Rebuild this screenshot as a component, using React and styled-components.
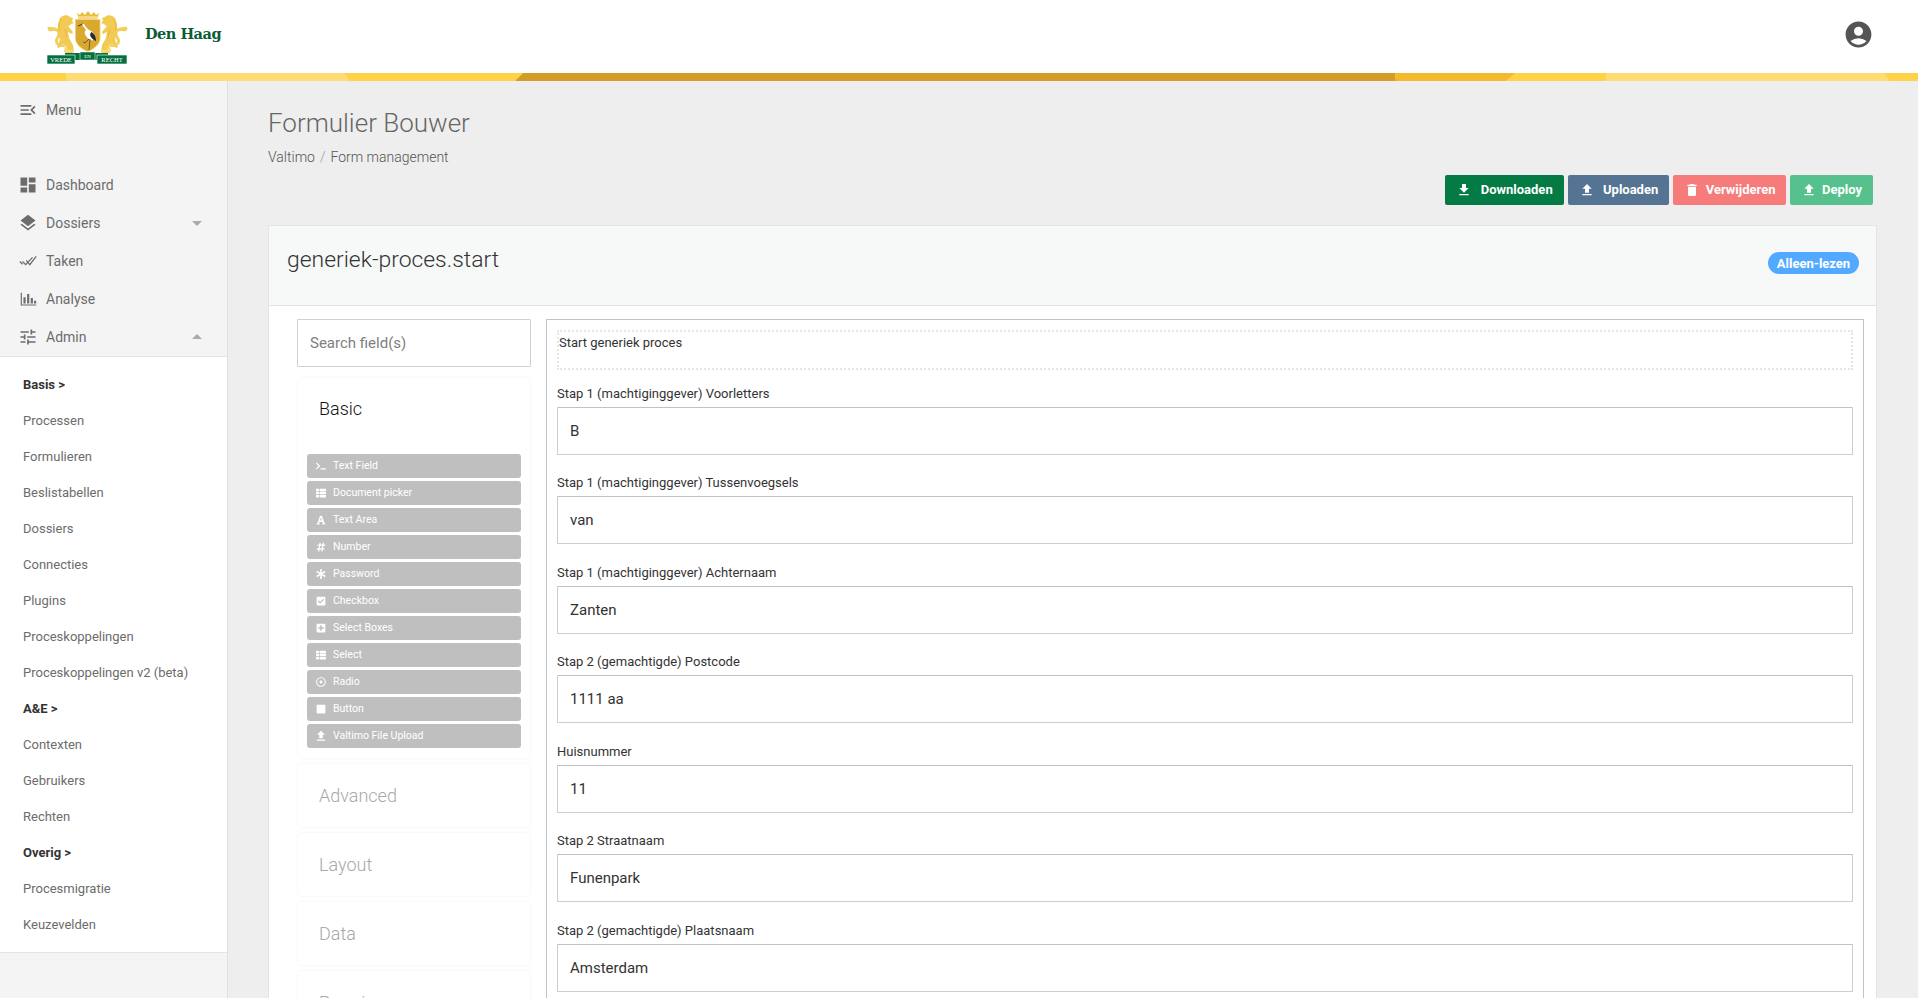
import React from 'react'
import styled, { createGlobalStyle } from 'styled-components'
import { MdMenuOpen, MdDashboard, MdLayers, MdTune, MdAccountCircle, MdFileDownload, MdFileUpload, MdDelete, MdArrowDropDown, MdArrowDropUp } from 'react-icons/md'
import { FaThList, FaFont, FaHashtag, FaAsterisk, FaCheckSquare, FaPlusSquare, FaRegDotCircle, FaStop, FaTerminal } from 'react-icons/fa'

const GlobalStyle = createGlobalStyle`
  html, body {
    margin: 0;
    height: 100%;
    overflow: hidden;
    background: #eeeeee;
  }

  * {
    box-sizing: border-box;
  }

  body {
    font-family: Roboto, sans-serif;
    -webkit-font-smoothing: antialiased;
  }
`

const Page = styled.div`
  height: 100vh;
  display: flex;
  flex-direction: column;
  overflow: hidden;
`

const Header = styled.header`
  height: 73px;
  flex: none;
  background: #ffffff;
  display: flex;
  align-items: center;
  justify-content: space-between;
  padding: 0 44px 0 47px;
`

const Brand = styled.div`
  display: flex;
  align-items: center;
  gap: 17px;
  margin-top: 1px;
`

const BrandName = styled.span`
  font-family: "DejaVu Serif", serif;
  font-weight: 700;
  font-size: 14.5px;
  letter-spacing: -0.5px;
  color: #0b5c36;
  margin-top: -7px;
`

const UserIcon = styled(MdAccountCircle)`
  width: 31px;
  height: 31px;
  color: #555555;
  margin-top: -4px;
`

const Strip = styled.svg`
  display: block;
  flex: none;
  width: 100%;
  height: 8px;
`

const Main = styled.div`
  flex: 1;
  min-height: 0;
  display: flex;
`

const Sidebar = styled.aside`
  width: 228px;
  flex: none;
  background: #f4f4f4;
  border-right: 1px solid #e0e0e0;
  padding-top: 10px;
`

const NavRow = styled.div`
  height: 38px;
  display: flex;
  align-items: center;
  padding-left: 20px;
  color: #6c6c6c;
  font-size: 14px;
  margin-bottom: ${(p) => (p.$spaced ? '37px' : '0')};
  position: relative;
`

const NavIcon = styled.span`
  width: 26px;
  height: 20px;
  display: flex;
  align-items: center;
  color: #6c6c6c;

  svg {
    width: 20px;
    height: 20px;
    flex: none;
    margin-left: -2.5px;
  }
`

const Caret = styled.span`
  position: absolute;
  right: 18px;
  top: 7px;
  color: #aaaaaa;
  display: flex;

  svg {
    width: 24px;
    height: 24px;
  }
`

const SubMenu = styled.div`
  background: #ffffff;
  border-top: 1px solid #e4e4e4;
  border-bottom: 1px solid #e4e4e4;
  padding: 9px 0 10px;
`

const SubItem = styled.div`
  height: 36px;
  display: flex;
  align-items: center;
  padding-left: 23px;
  font-size: 13px;
  font-weight: ${(p) => (p.$heading ? 700 : 400)};
  color: ${(p) => (p.$heading ? '#333333' : '#6c6c6c')};
`

const Content = styled.main`
  flex: 1;
  min-width: 0;
  padding: 0 41px 0 40px;
`

const Title = styled.h1`
  margin: 25px 0 0;
  font-size: 26px;
  line-height: 34px;
  font-weight: 300;
  color: #666666;
`

const Breadcrumb = styled.div`
  margin-top: 7px;
  display: flex;
  gap: 5px;
  font-size: 14px;
  line-height: 20px;
  font-weight: 300;
  color: #555555;
`

const Slash = styled.span`
  color: #9a9a9a;
`

const Actions = styled.div`
  display: flex;
  justify-content: flex-end;
  gap: 4px;
  padding-right: 4px;
  margin-top: 8px;
`

const ActionButton = styled.button`
  height: 30px;
  width: ${(p) => p.$width}px;
  border: 0;
  border-radius: 2px;
  background: ${(p) => p.$color};
  color: #ffffff;
  font-family: Roboto, sans-serif;
  font-size: 13px;
  font-weight: 700;
  display: flex;
  align-items: center;
  gap: ${(p) => p.$gap}px;
  padding: 0 0 1px 11px;

  svg {
    width: 16px;
    height: 16px;
    flex: none;
    margin-top: 1px;
  }
`

const Card = styled.section`
  margin-top: 20px;
  background: #ffffff;
  border: 1px solid #e3e5e5;
  border-bottom: 0;
`

const CardHeader = styled.div`
  height: 80px;
  background: #f7f8f8;
  border-bottom: 1px solid #e2e4e4;
  display: flex;
  align-items: center;
  justify-content: space-between;
  padding: 0 17px 0 18px;
`

const CardTitle = styled.h2`
  margin: -12px 0 0;
  font-size: 22.9px;
  font-weight: 300;
  color: #333333;
`

const Badge = styled.span`
  width: 91px;
  height: 22px;
  margin-top: -5px;
  border-radius: 11px;
  background: #53a9ff;
  color: #ffffff;
  font-size: 13px;
  font-weight: 700;
  display: flex;
  align-items: center;
  justify-content: center;
`

const Builder = styled.div`
  display: grid;
  grid-template-columns: 234px 1fr;
  gap: 15px;
  padding: 13px 12px 0 28px;
`

const Palette = styled.div`
  display: flex;
  flex-direction: column;
  gap: 4px;
`

const SearchInput = styled.input`
  height: 48px;
  margin-bottom: 6px;
  border: 1px solid #cfd0d6;
  border-radius: 1px;
  padding: 0 12px;
  font-family: Roboto, sans-serif;
  font-size: 15px;
  color: #333333;
  outline: none;

  &::placeholder {
    color: #808080;
  }
`

const Group = styled.div`
  height: ${(p) => (p.$open ? '382px' : '65px')};
  border: 1px solid #fafafa;
  border-radius: 4px;
  box-shadow: 0 0 2px rgba(0, 0, 0, 0.02);
  padding: 0 9px;
`

const GroupTitle = styled.div`
  height: ${(p) => (p.$open ? '60px' : '63px')};
  display: flex;
  align-items: center;
  padding-left: 12px;
  font-size: 18px;
  font-weight: 300;
  color: ${(p) => (p.$open ? '#111111' : '#a8a8a8')};
`

const FieldList = styled.div`
  margin-top: 15.5px;
  display: flex;
  flex-direction: column;
  gap: 3px;
`

const FieldButton = styled.div`
  height: 24px;
  background: #bfbfbf;
  border-radius: 3px;
  color: #ffffff;
  font-size: 10.5px;
  font-weight: 400;
  display: flex;
  align-items: center;
  padding-left: 9px;

  svg {
    width: 10px;
    height: 10px;
    flex: none;
    margin-right: 7px;
  }
`

const UploadGlyph = styled(MdFileUpload)`
  && {
    width: 14px;
    height: 14px;
    margin: 0 5px 0 -2px;
  }
`

const FormBox = styled.div`
  border: 1px solid #c4c4c4;
  border-bottom: 0;
  padding: 10px 10px 0;
`

const IntroBox = styled.div`
  height: 40px;
  border: 2px dotted #e6e6e6;
  padding: 3px 0;
  font-size: 13px;
  line-height: 16px;
  color: #333333;
  margin-bottom: 15.5px;
`

const Field = styled.div`
  height: 89.5px;
`

const FieldLabel = styled.label`
  display: block;
  font-size: 13px;
  line-height: 16px;
  color: #333333;
  margin-bottom: 5px;
`

const FieldInput = styled.input`
  display: block;
  width: 100%;
  height: 48px;
  border: 1px solid #ccced6;
  border-top-color: #bfc1c8;
  border-radius: 1px;
  padding: 0 12px;
  font-family: Roboto, sans-serif;
  font-size: 15px;
  color: #333333;
  background: #ffffff;
  outline: none;
`

const TakenIcon = () => (
  <svg viewBox="-2 -2 22 22" fill="none" stroke="currentColor" strokeWidth="1.4">
    <path d="M0 9.5l3 3" />
    <path d="M3 9.5l3.5 3.5L14 5" />
    <path d="M7 8.5l1.5 1.5L11 13l7-9" />
  </svg>
)

const AnalyseIcon = () => (
  <svg viewBox="-2 -2 22 22" fill="currentColor">
    <path d="M1 2h1.3v13H18v1.2H1z" />
    <path d="M4 7h2.4v7H4zM8 3.5h2.4V14H8zM12 8h2.4v6H12zM15.6 11H18v3h-2.4z" />
  </svg>
)

const RibbonText = styled.text`
  font-family: "Liberation Serif", serif;
  font-size: ${(p) => (p.$small ? '5px' : '6.5px')};
  fill: #ffffff;
  text-anchor: middle;
`

const Logo = () => (
  <svg width="81" height="55" viewBox="0 0 81 55">
    <defs>
      <g id="lion">
        <path d="M3 17c-3-1-3 3-1 4 3 1 6-1 8 1 2 3-2 5-2 9 0 4 4 6 9 6v-2c-4 0-6-1-6-4 0-3 4-5 3-9-1-4-7-5-11-5z" fill="#f3cf5c" />
        <path d="M13 8c2-3 8-4 10-1l3 1-1 3 2 2-3 1c-1 1-2 2-3 2l5 6-1 2-4-2 1 6 4 7 1 7-2 1h-7l2-3-4-6-4 4-2-1 3-7-2-8 0-8z" fill="#f2cb55" />
        <path d="M14 9c-2 4-3 8-1 12M18 19l2 9" stroke="#e0b23a" strokeWidth="0.8" fill="none" />
        <path d="M18 33l3 7h5v2h-9z" fill="#f8dc7c" />
      </g>
    </defs>
    <use href="#lion" />
    <use href="#lion" transform="translate(81 0) scale(-1 1)" />
    <path d="M30 3l3 2 2-3 3 3 3-4 3 4 3-3 2 3 3-2-2 6H32z" fill="#e8bd3e" />
    <rect x="31" y="6" width="19" height="3" fill="#f3d987" />
    <path d="M28.5 9.5h24.5v19c0 6-7 11-12.2 13-5.300-2-12.300-7-12.300-13z" fill="#d9a82e" stroke="#f2d36a" strokeWidth="0.8" />
    <path d="M36 14l-5 2" stroke="#333333" strokeWidth="1" />
    <path d="M36 14c1 3 3 4 5 7" stroke="#ffffff" strokeWidth="2" fill="none" />
    <ellipse cx="43" cy="25" rx="6.500" ry="3.800" transform="rotate(45 43 25)" fill="#ffffff" />
    <path d="M44 22c3 1 5 4 5 9-3-1-5-3-6-6z" fill="#2a2a2a" />
    <path d="M42 29l-4 4-2-1M43 29l-1 11" stroke="#5a4a20" strokeWidth="0.8" fill="none" />
    <path d="M18 43h43v7H18z" fill="#05703f" />
    <path d="M33 42h15v8H33z" fill="#05703f" stroke="#ffffff" strokeWidth="0.5" />
    <path d="M0 45h28v9H0zM50 45h30v9H50z" fill="#05703f" stroke="#ffffff" strokeWidth="0.6" />
    <RibbonText x="14" y="52">VREDE</RibbonText>
    <RibbonText x="40.5" y="48" $small>EN</RibbonText>
    <RibbonText x="65" y="52">RECHT</RibbonText>
  </svg>
)

const stripSegments = [
  ['#ffd249', '0,0 66,0 66,8 0,8'],
  ['#ffdc73', '66,0 344,0 349,8 66,8'],
  ['#ffd249', '344,0 523,0 515,8 349,8'],
  ['#d49d25', '523,0 1395,0 1396,8 515,8'],
  ['#f5b92f', '1395,0 1516,0 1506,8 1396,8'],
  ['#ffd249', '1516,0 1606,0 1606,8 1506,8'],
  ['#ffdc73', '1606,0 1884,0 1889,8 1606,8'],
  ['#ffd249', '1884,0 1918,0 1918,8 1889,8'],
]

const navItems = [
  { label: 'Dashboard', icon: <MdDashboard /> },
  { label: 'Dossiers', icon: <MdLayers />, caret: <MdArrowDropDown /> },
  { label: 'Taken', icon: <TakenIcon /> },
  { label: 'Analyse', icon: <AnalyseIcon /> },
  { label: 'Admin', icon: <MdTune />, caret: <MdArrowDropUp /> },
]

const subItems = [
  { label: 'Basis >', heading: true },
  { label: 'Processen' },
  { label: 'Formulieren' },
  { label: 'Beslistabellen' },
  { label: 'Dossiers' },
  { label: 'Connecties' },
  { label: 'Plugins' },
  { label: 'Proceskoppelingen' },
  { label: 'Proceskoppelingen v2 (beta)' },
  { label: 'A&E >', heading: true },
  { label: 'Contexten' },
  { label: 'Gebruikers' },
  { label: 'Rechten' },
  { label: 'Overig >', heading: true },
  { label: 'Procesmigratie' },
  { label: 'Keuzevelden' },
]

const paletteFields = [
  { label: 'Text Field', icon: <FaTerminal /> },
  { label: 'Document picker', icon: <FaThList /> },
  { label: 'Text Area', icon: <FaFont /> },
  { label: 'Number', icon: <FaHashtag /> },
  { label: 'Password', icon: <FaAsterisk /> },
  { label: 'Checkbox', icon: <FaCheckSquare /> },
  { label: 'Select Boxes', icon: <FaPlusSquare /> },
  { label: 'Select', icon: <FaThList /> },
  { label: 'Radio', icon: <FaRegDotCircle /> },
  { label: 'Button', icon: <FaStop /> },
  { label: 'Valtimo File Upload', icon: <UploadGlyph /> },
]

const formFields = [
  { label: 'Stap 1 (machtiginggever) Voorletters', value: 'B' },
  { label: 'Stap 1 (machtiginggever) Tussenvoegsels', value: 'van' },
  { label: 'Stap 1 (machtiginggever) Achternaam', value: 'Zanten' },
  { label: 'Stap 2 (gemachtigde) Postcode', value: '1111 aa' },
  { label: 'Huisnummer', value: '11' },
  { label: 'Stap 2 Straatnaam', value: 'Funenpark' },
  { label: 'Stap 2 (gemachtigde) Plaatsnaam', value: 'Amsterdam' },
]

const actions = [
  { label: 'Downloaden', color: '#047a45', width: 119, gap: 8.7, icon: <MdFileDownload /> },
  { label: 'Uploaden', color: '#557493', width: 101, gap: 8, icon: <MdFileUpload /> },
  { label: 'Verwijderen', color: '#f67b7b', width: 113, gap: 5.7, icon: <MdDelete /> },
  { label: 'Deploy', color: '#57c18e', width: 83, gap: 5, icon: <MdFileUpload /> },
]

const App = () => (
  <Page>
    <GlobalStyle />
    <Header>
      <Brand>
        <Logo />
        <BrandName>Den Haag</BrandName>
      </Brand>
      <UserIcon />
    </Header>
    <Strip viewBox="0 0 1918 8" preserveAspectRatio="none">
      {stripSegments.map(([fill, points]) => (
        <polygon key={points} fill={fill} points={points} />
      ))}
    </Strip>
    <Main>
      <Sidebar>
        <NavRow $spaced>
          <NavIcon>
            <MdMenuOpen />
          </NavIcon>
          Menu
        </NavRow>
        {navItems.map((item) => (
          <NavRow key={item.label}>
            <NavIcon>{item.icon}</NavIcon>
            {item.label}
            {item.caret && <Caret>{item.caret}</Caret>}
          </NavRow>
        ))}
        <SubMenu>
          {subItems.map((item) => (
            <SubItem key={item.label} $heading={item.heading}>
              {item.label}
            </SubItem>
          ))}
        </SubMenu>
      </Sidebar>
      <Content>
        <Title>Formulier Bouwer</Title>
        <Breadcrumb>
          <span>Valtimo</span>
          <Slash>/</Slash>
          <span>Form management</span>
        </Breadcrumb>
        <Actions>
          {actions.map((action) => (
            <ActionButton key={action.label} $color={action.color} $width={action.width} $gap={action.gap}>
              {action.icon}
              {action.label}
            </ActionButton>
          ))}
        </Actions>
        <Card>
          <CardHeader>
            <CardTitle>generiek-proces.start</CardTitle>
            <Badge>Alleen-lezen</Badge>
          </CardHeader>
          <Builder>
            <Palette>
              <SearchInput placeholder="Search field(s)" readOnly />
              <Group $open>
                <GroupTitle $open>Basic</GroupTitle>
                <FieldList>
                  {paletteFields.map((field) => (
                    <FieldButton key={field.label}>
                      {field.icon}
                      {field.label}
                    </FieldButton>
                  ))}
                </FieldList>
              </Group>
              <Group>
                <GroupTitle>Advanced</GroupTitle>
              </Group>
              <Group>
                <GroupTitle>Layout</GroupTitle>
              </Group>
              <Group>
                <GroupTitle>Data</GroupTitle>
              </Group>
              <Group>
                <GroupTitle>Premium</GroupTitle>
              </Group>
            </Palette>
            <FormBox>
              <IntroBox>Start generiek proces</IntroBox>
              {formFields.map((field) => (
                <Field key={field.label}>
                  <FieldLabel>{field.label}</FieldLabel>
                  <FieldInput readOnly value={field.value} />
                </Field>
              ))}
            </FormBox>
          </Builder>
        </Card>
      </Content>
    </Main>
  </Page>
)

export default App
